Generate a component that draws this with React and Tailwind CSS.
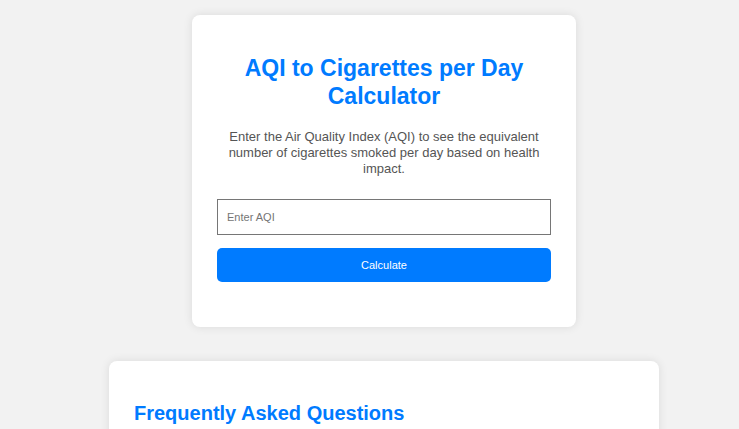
import React, { useState } from 'react';

function App() {
    const [aqi, setAqi] = useState('');

    return (
        <div className="min-h-screen bg-[#f2f2f2] font-['Liberation_Sans',Arial,sans-serif]">
            <div className="w-[768px] flex flex-col items-center pt-[15px]">
                {/* Calculator card */}
                <div className="w-[384px] bg-white rounded-lg shadow-[0_0_10px_rgba(0,0,0,0.1)] px-[25px] pt-[24px] pb-[45px] text-center">
                    <h1 className="mt-[16px] mb-[19px] text-[23px] leading-[27.5px] font-bold text-[#007bff]">
                        AQI to Cigarettes per Day Calculator
                    </h1>
                    <p className="text-[13px] leading-[16px] text-[#555] px-[10px]">
                        Enter the Air Quality Index (AQI) to see the equivalent number of cigarettes smoked per day based on health impact.
                    </p>
                    <input
                        type="number"
                        value={aqi}
                        onChange={(e) => setAqi(e.target.value)}
                        placeholder="Enter AQI"
                        className="mt-[22px] w-full h-[36px] border border-[#767676] px-[9px] text-[11px] text-[#333] placeholder:text-[#757575] outline-none"
                    />
                    <button className="mt-[13px] w-full h-[34px] bg-[#007bff] text-white text-[11px] rounded-[5px]">
                        Calculate
                    </button>
                </div>

                {/* FAQ card */}
                <div className="mt-[34px] w-[550px] bg-white rounded-lg shadow-[0_0_10px_rgba(0,0,0,0.1)] px-[25px] pt-[25px] pb-[25px]">
                    <h2 className="mt-[16px] text-[20px] leading-[23px] font-bold text-[#007bff]">
                        Frequently Asked Questions
                    </h2>
                </div>
            </div>
        </div>
    );
}

export default App;
